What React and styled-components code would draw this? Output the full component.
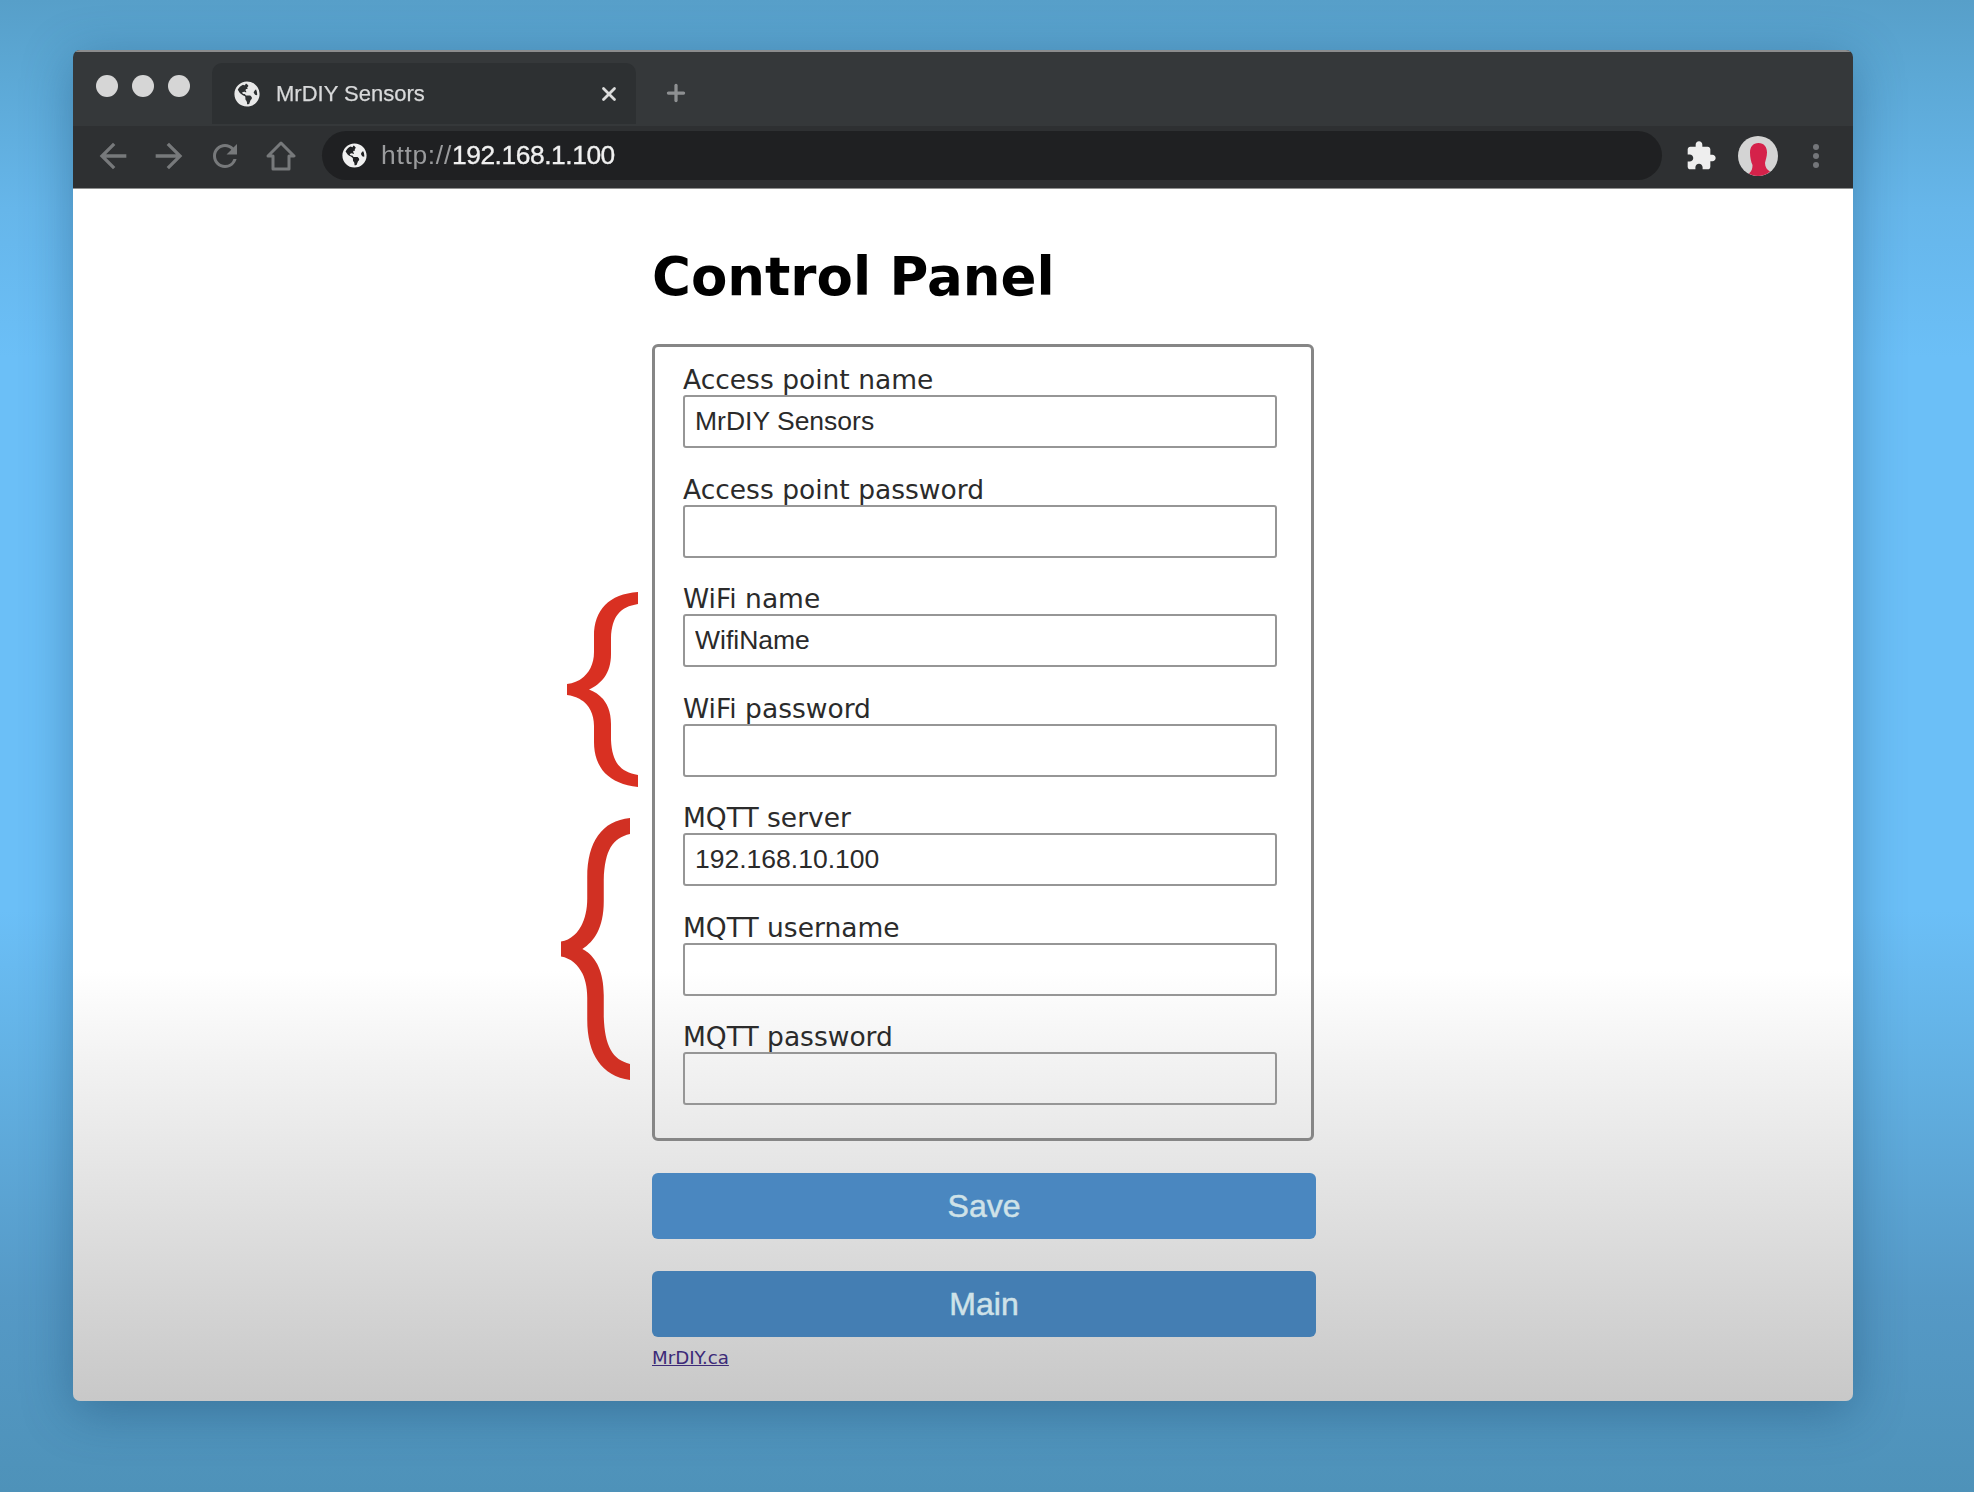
import React from "react";
import styled, { createGlobalStyle } from "styled-components";
import { FaGlobeAmericas } from "react-icons/fa";
import { X, Plus } from "lucide-react";

const GlobalStyle = createGlobalStyle`
  html, body {
    margin: 0;
    padding: 0;
  }
`;

const Desktop = styled.div`
  width: 1974px;
  height: 1492px;
  box-sizing: border-box;
  padding: 50px 0 0 73px;
  overflow: hidden;
  background: linear-gradient(
    180deg,
    #579fc9 0%,
    #5ca8d5 5%,
    #66b6ea 14%,
    #6bbff7 24%,
    #6bbff7 61%,
    #62b0e2 72%,
    #5599c6 87%,
    #4e92b9 100%
  );
`;

const BrowserWindow = styled.div`
  position: relative;
  width: 1780px;
  height: 1351px;
  display: flex;
  flex-direction: column;
  border-radius: 7px;
  overflow: hidden;
  box-shadow: 0 10px 50px rgba(25, 70, 105, 0.42);
  filter: blur(0.55px);
`;

const TabStrip = styled.div`
  height: 76px;
  flex: none;
  display: flex;
  align-items: flex-end;
  background: #35383a;
  border-top: 2px solid #8b8c8d;
  box-sizing: border-box;
`;

const Dots = styled.div`
  width: 139px;
  height: 60px;
  flex: none;
  display: flex;
  gap: 14px;
  padding: 0 0 0 23px;
  box-sizing: border-box;
  align-self: flex-start;
  margin-top: 23px;
`;

const Dot = styled.span`
  width: 22px;
  height: 22px;
  border-radius: 50%;
  background: #d6d6d6;
`;

const Tab = styled.div`
  width: 424px;
  height: 61px;
  flex: none;
  display: flex;
  align-items: center;
  padding: 0 16px 0 22px;
  box-sizing: border-box;
  border-radius: 10px 10px 0 0;
  margin-bottom: 2px;
  background: #2d3032;
  color: #d8d9da;
  font: 22px "Liberation Sans", Arial, sans-serif;
  -webkit-text-stroke: 0.25px #d8d9da;
`;

const TabTitle = styled.span`
  flex: 1;
  margin-left: 16px;
`;

const NewTab = styled.div`
  margin: 0 0 20px 27px;
  display: flex;
  color: #8e9092;
`;

const Toolbar = styled.div`
  height: 63px;
  flex: none;
  display: flex;
  align-items: center;
  padding: 0 26px 3px 26px;
  box-sizing: border-box;
  background: #2e3032;
  border-bottom: 1px solid #8f9090;
`;

const NavButton = styled.div`
  width: 28px;
  height: 34px;
  flex: none;
  display: flex;
  align-items: center;
  justify-content: center;
  margin-right: 28px;
  color: #77797b;
`;

const NavIcon = styled.svg`
  flex: none;
  fill: currentColor;
`;

const HomeIcon = styled.svg`
  flex: none;
  fill: none;
  stroke: currentColor;
  stroke-width: 3;
  stroke-linejoin: round;
`;

const UrlBar = styled.div`
  width: 1340px;
  height: 49px;
  flex: none;
  margin-left: -1px;
  display: flex;
  align-items: center;
  padding-left: 20px;
  box-sizing: border-box;
  border-radius: 25px;
  background: #1f2022;
  color: #9a9b9d;
  font: 26.4px "Liberation Sans", Arial, sans-serif;
`;

const UrlText = styled.span`
  margin-left: 14px;
  letter-spacing: 0.7px;
`;

const Host = styled.span`
  color: #f0f0f0;
  letter-spacing: -0.45px;
  -webkit-text-stroke: 0.35px #f0f0f0;
`;

const ToolIcons = styled.div`
  flex: 1;
  display: flex;
  align-items: center;
  color: #eeeeee;
  padding-left: 23px;
`;

const PuzzleIcon = styled.svg`
  flex: none;
  fill: #eeeeee;
`;

const Avatar = styled.svg`
  flex: none;
  margin-left: 21px;
`;

const Kebab = styled.div`
  margin-left: 35px;
  display: flex;
  flex-direction: column;
  gap: 3px;
`;

const KebabDot = styled.span`
  width: 6px;
  height: 6px;
  border-radius: 50%;
  background: #74767a;
`;

const Page = styled.div`
  position: relative;
  flex: 1;
  display: flex;
  flex-direction: column;
  align-items: flex-start;
  padding-left: 579px;
  background: linear-gradient(180deg, #ffffff 0%, #ffffff 64.5%, #f3f3f3 71.5%, #c8c8c8 100%);
`;

const Title = styled.h1`
  margin: 58px 0 0;
  height: 97px;
  font: bold 53px/60px "DejaVu Sans", Verdana, sans-serif;
  color: #000;
`;

const Panel = styled.div`
  width: 662px;
  height: 797px;
  box-sizing: border-box;
  padding: 18px 0 0 28px;
  border: 3px solid #868686;
  border-radius: 6px;
  display: flex;
  flex-direction: column;
  gap: 26.5px;
`;

const Field = styled.div`
  display: flex;
  flex-direction: column;
`;

const Label = styled.label`
  height: 30px;
  font: 26.5px/30px "DejaVu Sans", Verdana, sans-serif;
  color: #2b2b2b;
  white-space: nowrap;
`;

const Input = styled.input`
  width: 594px;
  height: 53px;
  box-sizing: border-box;
  padding: 0 10px;
  border: 2px solid #969696;
  border-radius: 3px;
  background: transparent;
  outline: none;
  font: 26.5px "Liberation Sans", Arial, sans-serif;
  color: #2a2a2a;
`;

const ActionButton = styled.button`
  width: 664px;
  height: 66px;
  flex: none;
  margin-top: ${(p) => p.$top}px;
  border: none;
  border-radius: 6px;
  background: ${(p) => p.$color};
  color: #cfe2e8;
  font: 32px "Liberation Sans", Arial, sans-serif;
  -webkit-text-stroke: 0.5px #cfe2e8;
`;

const FooterLink = styled.a`
  margin-top: 9px;
  font: 18.2px/24px "DejaVu Sans", Verdana, sans-serif;
  color: #3c2a78;
  text-decoration: underline;
`;

const Brace = styled.svg`
  position: absolute;
  left: ${(p) => p.$left}px;
  top: ${(p) => p.$top}px;
`;

const fields = [
  { label: "Access point name", value: "MrDIY Sensors" },
  { label: "Access point password", value: "" },
  { label: "WiFi name", value: "WifiName" },
  { label: "WiFi password", value: "" },
  { label: "MQTT server", value: "192.168.10.100" },
  { label: "MQTT username", value: "" },
  { label: "MQTT password", value: "" },
];

const bracePath =
  "M71 0C42 2 27 18 27 44V60C27 78 16 90 0 92V103C16 105 27 116 27 134V150C27 176 42 192 71 195V183C53 180 45 170 44 148V132C44 112 34 102 22 97.5C34 92 44 82 44 62V46C45 24 53 15 71 12Z";

function App() {
  return (
    <>
      <GlobalStyle />
      <Desktop>
        <BrowserWindow>
          <TabStrip>
            <Dots>
              <Dot />
              <Dot />
              <Dot />
            </Dots>
            <Tab>
              <FaGlobeAmericas size={26} color="#e8e8e8" />
              <TabTitle>MrDIY Sensors</TabTitle>
              <X size={22} strokeWidth={3} color="#dcdcdc" />
            </Tab>
            <NewTab>
              <Plus size={26} strokeWidth={3} />
            </NewTab>
          </TabStrip>
          <Toolbar>
            <NavButton>
              <NavIcon width="40" height="40" viewBox="0 0 24 24">
                <path d="M20 11H7.83l5.59-5.59L12 4l-8 8 8 8 1.41-1.41L7.83 13H20v-2z" />
              </NavIcon>
            </NavButton>
            <NavButton>
              <NavIcon width="40" height="40" viewBox="0 0 24 24">
                <path d="M4 11h12.17l-5.59-5.59L12 4l8 8-8 8-1.41-1.41L16.17 13H4v-2z" />
              </NavIcon>
            </NavButton>
            <NavButton>
              <NavIcon width="36" height="36" viewBox="0 0 24 24">
                <path d="M17.65 6.35A7.958 7.958 0 0 0 12 4c-4.42 0-7.99 3.58-7.99 8s3.57 8 7.99 8c3.73 0 6.84-2.55 7.73-6h-2.08A5.99 5.99 0 0 1 12 18c-3.31 0-6-2.69-6-6s2.69-6 6-6c1.66 0 3.14.69 4.22 1.78L13 11h7V4l-2.35 2.35z" />
              </NavIcon>
            </NavButton>
            <NavButton>
              <HomeIcon width="30" height="32" viewBox="0 0 30 32">
                <path d="M15 3 28 16H23V29H7V16H2Z" />
              </HomeIcon>
            </NavButton>
            <UrlBar>
              <FaGlobeAmericas size={25} color="#f0f0f0" />
              <UrlText>
                http://<Host>192.168.1.100</Host>
              </UrlText>
            </UrlBar>
            <ToolIcons>
              <PuzzleIcon width="32" height="32" viewBox="0 0 24 24">
                <path d="M20.5 11H19V7c0-1.1-.9-2-2-2h-4V3.5C13 2.12 11.88 1 10.5 1S8 2.12 8 3.5V5H4c-1.1 0-1.99.9-1.99 2v3.8H3.5c1.49 0 2.7 1.21 2.7 2.7s-1.21 2.7-2.7 2.7H2V20c0 1.1.9 2 2 2h3.8v-1.5c0-1.49 1.21-2.7 2.7-2.7 1.49 0 2.7 1.21 2.7 2.7V22H17c1.1 0 2-.9 2-2v-4h1.5c1.38 0 2.5-1.12 2.5-2.5S21.88 11 20.5 11z" />
              </PuzzleIcon>
              <Avatar width="40" height="40" viewBox="0 0 40 40">
                <circle cx="20" cy="20" r="20" fill="#d4d4d4" />
                <path
                  d="M20.5 7C26 7 29 11 29 16.500 29 21 27.500 24 27 27 27 31 29 34 32 35.500 28 39 24 40 20 40 16 40 13 39 11 37.500 14 35 14.500 32 14.500 29 13 26 12 21 12 16.500 12 11 15 7 20.500 7Z"
                  fill="#d5224a"
                />
              </Avatar>
              <Kebab>
                <KebabDot />
                <KebabDot />
                <KebabDot />
              </Kebab>
            </ToolIcons>
          </Toolbar>
          <Page>
            <Title>Control Panel</Title>
            <Panel>
              {fields.map((f) => (
                <Field key={f.label}>
                  <Label>{f.label}</Label>
                  <Input type="text" readOnly defaultValue={f.value} />
                </Field>
              ))}
            </Panel>
            <ActionButton $top={32} $color="#4a87c0">
              Save
            </ActionButton>
            <ActionButton $top={32} $color="#447eb3">
              Main
            </ActionButton>
            <FooterLink href="#">MrDIY.ca</FooterLink>
            <Brace $left={494} $top={403} width="71" height="195" viewBox="0 0 71 195">
              <path d={bracePath} fill="#d93022" />
            </Brace>
            <Brace $left={488} $top={629} width="69" height="262" viewBox="0 0 71 195" preserveAspectRatio="none">
              <path d={bracePath} fill="#d13023" />
            </Brace>
          </Page>
        </BrowserWindow>
      </Desktop>
    </>
  );
}

export default App;
